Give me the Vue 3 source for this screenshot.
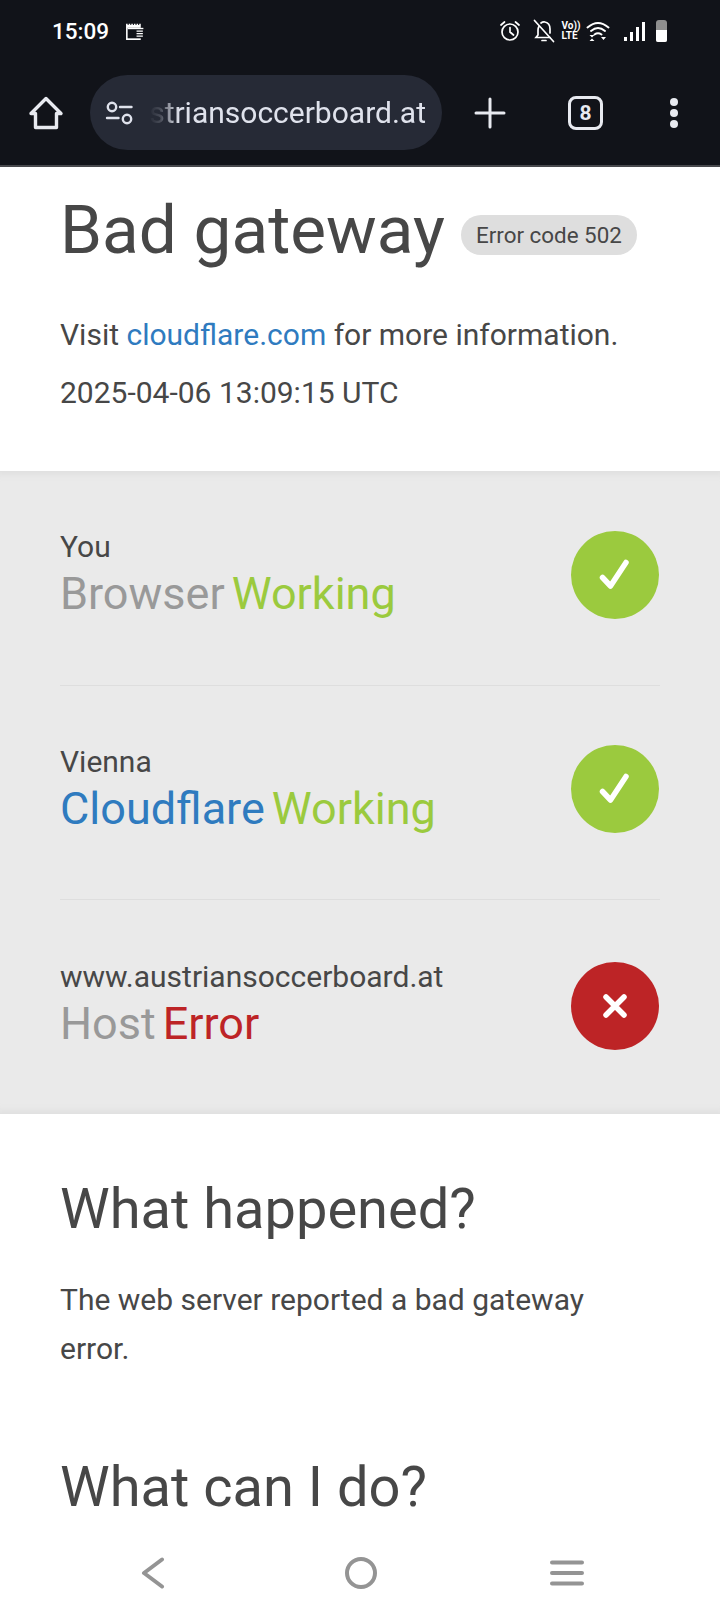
<script setup>
const rows = [
  { place: 'You', name: 'Browser', nameClass: 'grey', status: 'Working', statusClass: 'green', ok: true },
  { place: 'Vienna', name: 'Cloudflare', nameClass: 'blue', status: 'Working', statusClass: 'green', ok: true },
  { place: 'www.austriansoccerboard.at', name: 'Host', nameClass: 'grey', status: 'Error', statusClass: 'red', ok: false }
]
</script>

<template>
  <div class="phone">
    <header class="chrome">
      <div class="status">
        <div class="status-left">
          <span class="time">15:09</span>
          <svg width="21" height="19" viewBox="0 0 20 18">
            <path d="M1 1.5h1.5v1.2h1V1.500h1.500v1.200h1V1.500h1.500v1.200h1V1.500h1.500v1.200h1V1.500h1.500v1.200h1V1.500h1.500V17H1z" fill="#fff"/>
            <rect x="2.500" y="5.500" width="15" height="10" fill="#111319"/>
            <rect x="2.500" y="5.500" width="15" height="1.300" fill="#fff"/>
            <path d="M11 8h6v1.200h-6zM11 10.400h6v1.200h-6zM11 12.800h6V14h-6z" fill="#fff"/>
          </svg>
        </div>
        <div class="status-right">
          <svg width="22" height="22" viewBox="0 0 22 22" fill="none" stroke="#fff" stroke-width="1.700" stroke-linecap="round">
            <circle cx="11" cy="12" r="8"/>
            <path d="M11 7.500V12l3.500 3M2 5l3.500-3M20 5l-3.500-3"/>
          </svg>
          <svg class="bell" width="22" height="24" viewBox="0 0 22 24" fill="none" stroke="#fff" stroke-width="1.700" stroke-linecap="round">
            <path d="M6 7.500Q5 9 5 11v5l-2 2.500h14M8 4q2-1.500 4-1 5 1 5 7v4"/>
            <path d="M9 21.500h4M1.500 1.500l19 21"/>
          </svg>
          <div class="volte"><span>Vo))</span><span>LTE</span></div>
          <svg width="24" height="22" viewBox="0 0 24 22" fill="none" stroke="#fff" stroke-width="1.900" stroke-linecap="round">
            <path d="M1.500 7.500q10.500-9 21 0M5 11q7-6 14 0M8.500 14.500q3.500-2.500 7 0"/>
            <path d="M3.500 15l2.500 2.500L8.500 15zM3.500 21l2.500-2.500L8.500 21zM15 17h5l-2.500 3z" fill="#fff" stroke="none"/>
          </svg>
          <div class="signal"><i></i><i></i><i></i><i></i></div>
          <div class="battery"><div></div></div>
        </div>
      </div>
      <div class="toolbar">
        <svg class="home" width="36" height="36" viewBox="0 0 36 36" fill="none" stroke="#e8eaf0" stroke-width="3.400" stroke-linejoin="round" stroke-linecap="round">
          <path d="M3 18.500 18 3.500l15 15h-4.500V32.500h-21V18.500z"/>
        </svg>
        <div class="omnibox">
          <svg width="30" height="26" viewBox="0 0 30 26" fill="none" stroke="#dfe2ec" stroke-width="2.400" stroke-linecap="round">
            <circle cx="7" cy="7" r="4.200"/>
            <path d="M15 7h11.500M2 18h11.500"/>
            <circle cx="22" cy="19" r="4.200"/>
          </svg>
          <span class="url">striansoccerboard.at</span>
        </div>
        <svg class="plus" width="32" height="32" viewBox="0 0 32 32" stroke="#e8eaf0" stroke-width="3" stroke-linecap="round">
          <path d="M16 2v28M2 16h28"/>
        </svg>
        <div class="tabs">8</div>
        <div class="dots"><i></i><i></i><i></i></div>
      </div>
    </header>

    <main class="page">
      <section class="head">
        <div class="title-row">
          <h1>Bad gateway</h1>
          <span class="badge">Error code 502</span>
        </div>
        <p class="visit">Visit <a class="blue">cloudflare.com</a> for more information.</p>
        <p class="stamp">2025-04-06 13:09:15 UTC</p>
      </section>

      <section class="diagram">
        <div v-for="row in rows" :key="row.name" class="row">
          <div class="row-text">
            <div class="place">{{ row.place }}</div>
            <div class="big">
              <span :class="row.nameClass">{{ row.name }}</span>
              <span :class="row.statusClass">{{ row.status }}</span>
            </div>
          </div>
          <div class="circle" :class="row.ok ? 'ok' : 'bad'">
            <svg v-if="row.ok" width="44" height="44" viewBox="0 0 44 44" fill="none" stroke="#fff" stroke-width="5.500" stroke-linecap="round" stroke-linejoin="round">
              <path d="M9.500 24.500 17.500 33 33 9.500"/>
            </svg>
            <svg v-else width="28" height="28" viewBox="0 0 28 28" fill="none" stroke="#fff" stroke-width="5.500" stroke-linecap="round">
              <path d="M5 5l18 18M23 5 5 23"/>
            </svg>
          </div>
        </div>
      </section>

      <section class="info">
        <h2>What happened?</h2>
        <p>The web server reported a bad gateway error.</p>
        <h2 class="second">What can I do?</h2>
      </section>
    </main>

    <nav class="navbar">
      <svg class="back" width="24" height="32" viewBox="0 0 24 32" fill="none" stroke="#949494" stroke-width="4" stroke-linecap="round" stroke-linejoin="round">
        <path d="M21 2.500 3 16l18 13.500"/>
      </svg>
      <svg width="32" height="32" viewBox="0 0 32 32" fill="none" stroke="#949494" stroke-width="4">
        <circle cx="16" cy="16" r="14"/>
      </svg>
      <svg width="34" height="26" viewBox="0 0 34 26" stroke="#949494" stroke-width="4" stroke-linecap="round">
        <path d="M2 2.500h30M2 13h30M2 23.500h30"/>
      </svg>
    </nav>
  </div>
</template>

<style>
body {
  background: #fff;
}
</style>

<style scoped>
.phone {
  width: 720px;
  height: 1612px;
  display: flex;
  flex-direction: column;
  overflow: hidden;
  background: #fff;
  font-family: Roboto, "Liberation Sans", sans-serif;
  color: #474747;
}
.chrome {
  height: 167px;
  flex: none;
  box-sizing: border-box;
  background: #111319;
  border-bottom: 2px solid #47484c;
}
.status {
  height: 62px;
  padding: 18px 53px 0 52px;
  box-sizing: border-box;
  display: flex;
  justify-content: space-between;
  align-items: flex-start;
}
.status-left {
  display: flex;
  align-items: center;
  gap: 16px;
  height: 26px;
}
.time {
  color: #fff;
  font-size: 22.5px;
  font-weight: 500;
}
.status-right {
  display: flex;
  align-items: center;
  height: 26px;
  gap: 0;
}
.bell {
  margin-left: 12px;
}
.volte {
  display: flex;
  flex-direction: column;
  margin: 0 5px 0 7px;
  color: #fff;
  font-size: 10px;
  line-height: 10px;
  font-weight: 700;
}
.signal {
  display: flex;
  align-items: flex-end;
  gap: 2.5px;
  height: 20px;
  margin-left: 14px;
}
.signal i {
  width: 3.5px;
  background: #fff;
}
.signal i:nth-child(1) { height: 4px; }
.signal i:nth-child(2) { height: 9px; }
.signal i:nth-child(3) { height: 14px; }
.signal i:nth-child(4) { height: 19px; }
.battery {
  width: 11px;
  height: 22px;
  margin-left: 11px;
  border-radius: 3px 3px 2px 2px;
  background: #8f8f8f;
  display: flex;
  align-items: flex-end;
}
.battery div {
  width: 100%;
  height: 12px;
  background: #fff;
  border-radius: 0 0 2px 2px;
}
.toolbar {
  height: 103px;
  padding: 13px 0 0 28px;
  box-sizing: border-box;
  display: flex;
  align-items: flex-start;
}
.home {
  margin-top: 20px;
  flex: none;
}
.omnibox {
  width: 352px;
  height: 75px;
  margin-left: 26px;
  padding: 0 16px 0 15px;
  box-sizing: border-box;
  flex: none;
  border-radius: 38px;
  background: #262a36;
  display: flex;
  align-items: center;
  justify-content: space-between;
}
.url {
  color: #dfe2ec;
  font-size: 30px;
  white-space: nowrap;
  -webkit-mask-image: linear-gradient(to right, transparent 0, rgba(0, 0, 0, 0.2) 12px, rgba(0, 0, 0, 0.6) 20px, #000 30px);
  mask-image: linear-gradient(to right, transparent 0, rgba(0, 0, 0, 0.2) 12px, rgba(0, 0, 0, 0.6) 20px, #000 30px);
}
.plus {
  margin: 22px 0 0 32px;
  flex: none;
}
.tabs {
  width: 35px;
  height: 34px;
  margin: 21px 0 0 62px;
  flex: none;
  box-sizing: border-box;
  border: 3px solid #e8eaf0;
  border-radius: 8px;
  color: #e8eaf0;
  font-size: 21px;
  font-weight: 700;
  display: flex;
  align-items: center;
  justify-content: center;
}
.dots {
  margin: 23px 0 0 67px;
  display: flex;
  flex-direction: column;
  gap: 3px;
}
.dots i {
  width: 8px;
  height: 8px;
  border-radius: 50%;
  background: #e8eaf0;
}
.page {
  flex: 1;
  min-height: 0;
  overflow: hidden;
}
.head {
  height: 304px;
  padding: 0 60px;
  box-sizing: border-box;
}
.title-row {
  display: flex;
  align-items: center;
  gap: 16px;
  height: 124px;
}
h1 {
  margin: 0;
  font-size: 67.5px;
  font-weight: 400;
  color: #474747;
  white-space: nowrap;
}
.badge {
  margin-top: 12px;
  padding: 0 15px;
  height: 40px;
  line-height: 40px;
  border-radius: 20px;
  background: #dedede;
  font-size: 22.4px;
  white-space: nowrap;
}
.visit,
.stamp {
  margin: 0;
  font-size: 30px;
  line-height: 58px;
}
.visit {
  margin-top: 15px;
}
.blue { color: #2f7bbf; }
.grey { color: #999; }
.green { color: #9bca3e; }
.red { color: #bd2426; }
.diagram {
  height: 643px;
  padding: 0 60px;
  box-sizing: border-box;
  background: #eaeaea;
  box-shadow: inset 0 10px 8px -8px #dcdcdc, inset 0 -10px 8px -8px #dcdcdc;
}
.row {
  height: 214.500px;
  padding-bottom: 6px;
  box-sizing: border-box;
  display: flex;
  align-items: center;
  justify-content: space-between;
  border-bottom: 1px solid #dedede;
}
.row:last-child {
  border-bottom: none;
}
.row:last-child .circle {
  margin-top: 4px;
}
.place {
  font-size: 30px;
  line-height: 36px;
  margin-bottom: 3px;
}
.big {
  font-size: 45px;
  line-height: 52px;
  display: flex;
  gap: 7px;
}
.circle {
  width: 88px;
  height: 88px;
  margin-right: 1px;
  border-radius: 50%;
  display: flex;
  align-items: center;
  justify-content: center;
}
.ok { background: #9bca3e; }
.bad { background: #bd2426; }
.info {
  padding: 57px 60px 0;
}
h2 {
  margin: 0;
  font-size: 56px;
  line-height: 76px;
  font-weight: 400;
  color: #474747;
}
.info p {
  margin: 28px 0 0;
  max-width: 560px;
  font-size: 30px;
  line-height: 49px;
}
.info .second {
  margin-top: 76px;
}
.navbar {
  height: 92px;
  flex: none;
  background: #fff;
  display: flex;
  align-items: center;
  padding: 14px 136px 0 141px;
  justify-content: space-between;
  box-sizing: border-box;
}
.back {
  margin-right: 6px;
}
</style>
